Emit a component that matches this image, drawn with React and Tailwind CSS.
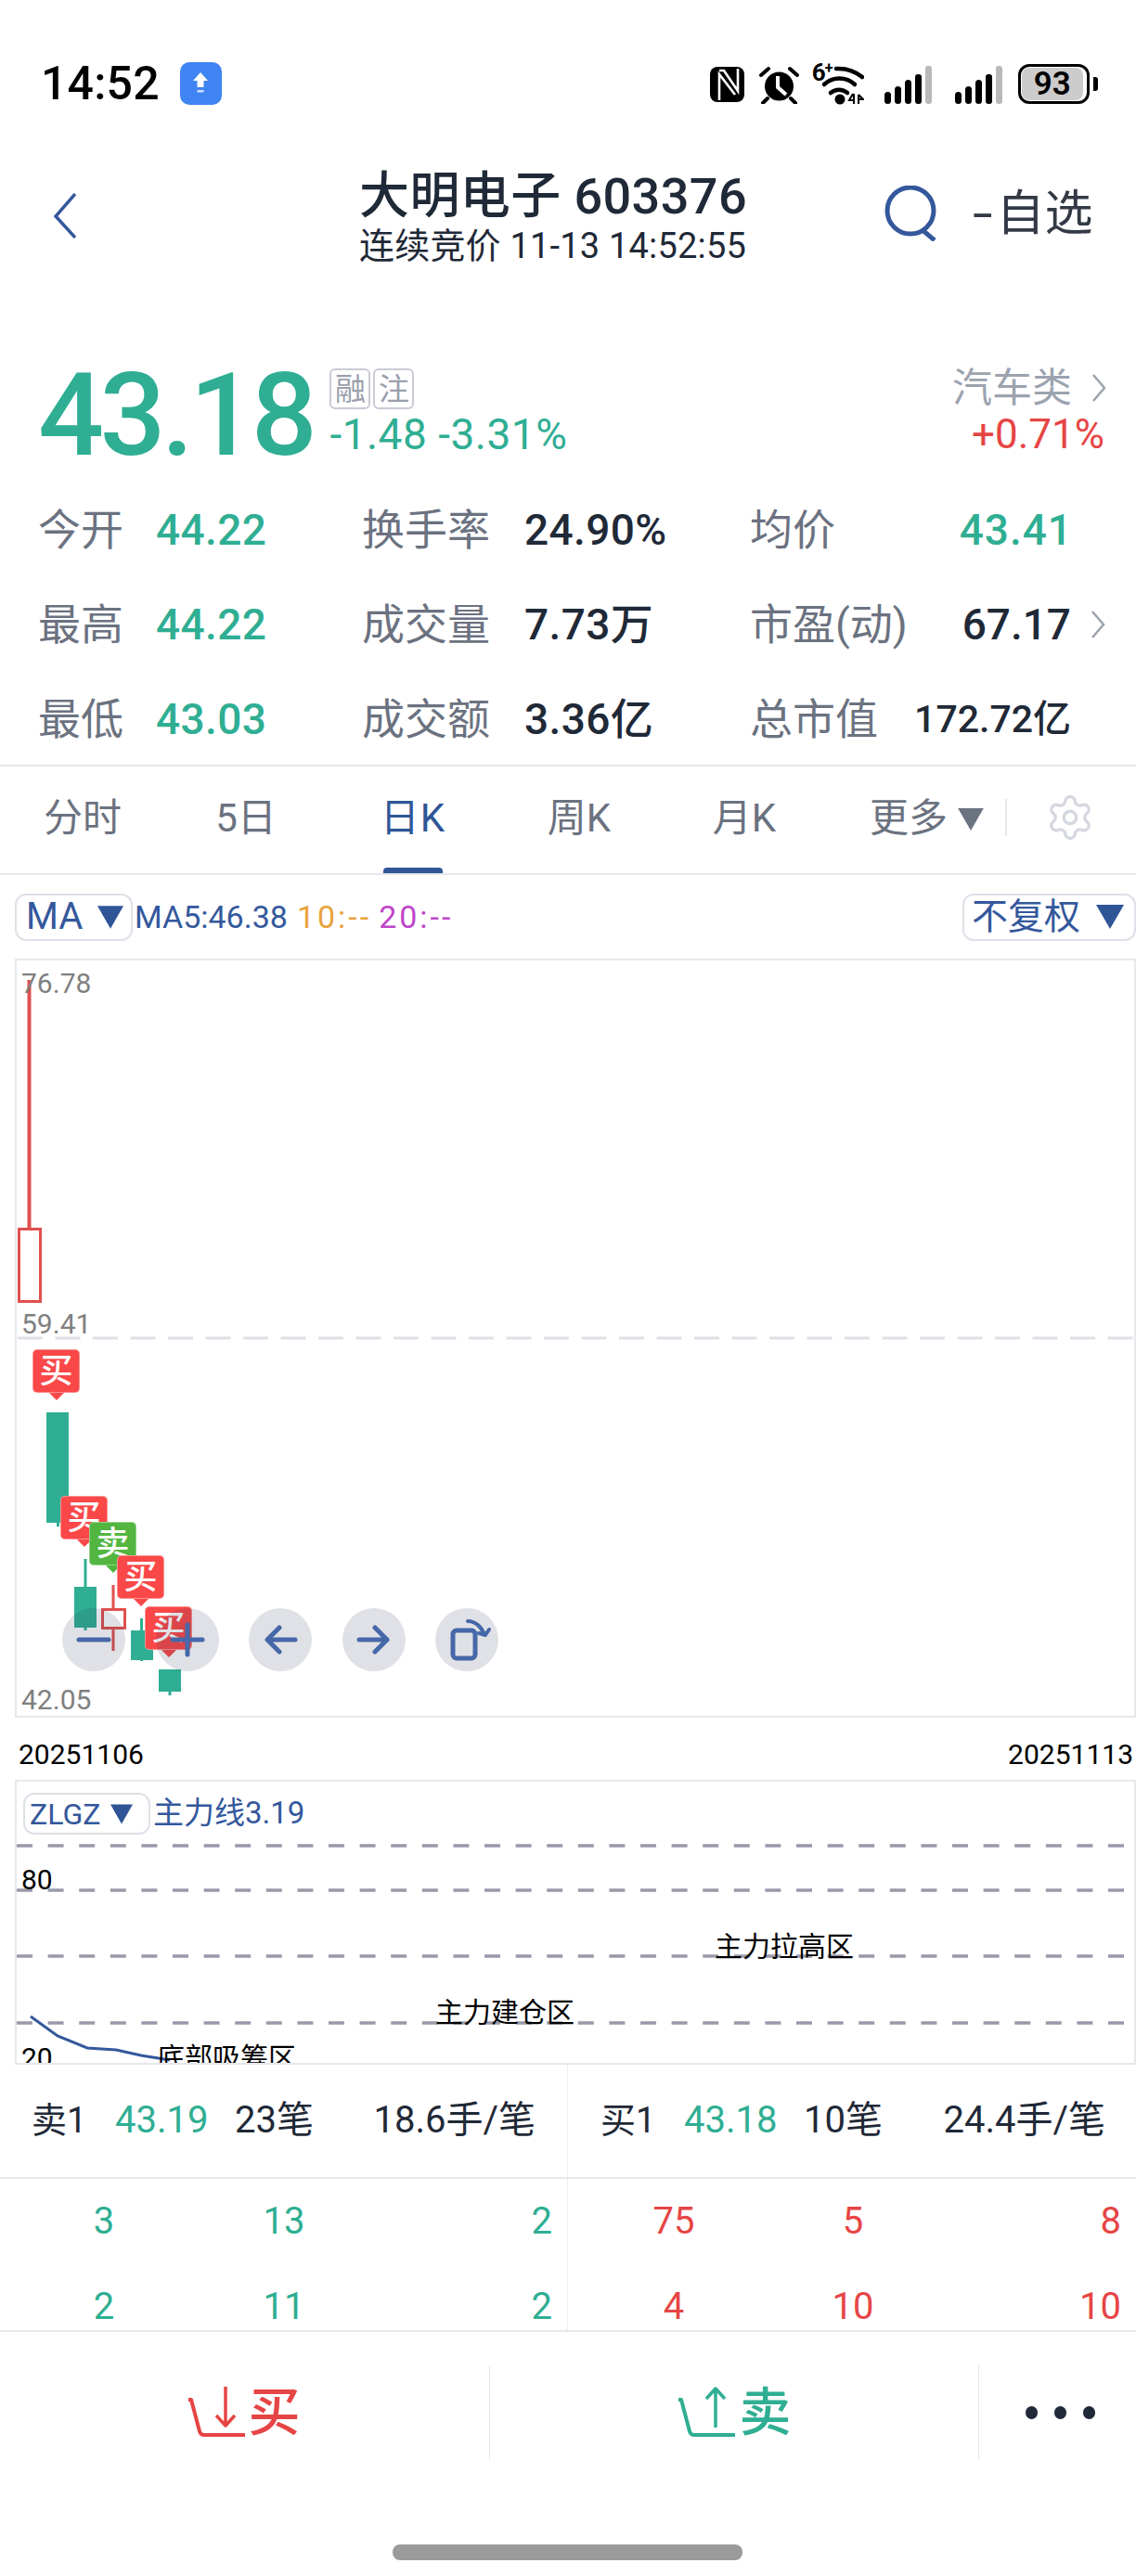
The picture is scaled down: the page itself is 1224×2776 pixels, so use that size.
import React from "react";
import { Settings } from "lucide-react";

const TEAL = "text-[#2fae93]";
const RED = "text-[#e64545]";

const Tri = ({ className }) => (
  <svg viewBox="0 0 30 26" className={className}>
    <polygon points="0,0 30,0 15,26" fill="currentColor" />
  </svg>
);

const Chevron = ({ className }) => (
  <svg viewBox="0 0 16 30" className={className} fill="none" stroke="currentColor" strokeWidth="2.5">
    <path d="M2 1 L14 15 L2 29" />
  </svg>
);

const Signal = ({ className }) => (
  <svg viewBox="0 0 51 41" className={className}>
    <rect x="0" y="28" width="7" height="13" rx="3.5" fill="#000" />
    <rect x="11" y="22" width="7" height="19" rx="3.5" fill="#000" />
    <rect x="22" y="15" width="7" height="26" rx="3.5" fill="#000" />
    <rect x="33" y="9" width="7" height="32" rx="3" fill="#000" />
    <rect x="44" y="0" width="7" height="41" rx="3" fill="#b9b9b9" />
  </svg>
);

const StatusBar = () => (
  <div className="h-[150px] flex items-start pt-[67px] pl-[44px] text-black">
    <span className="text-[50px] font-medium leading-[46px] tracking-[0.2px]">14:52</span>
    <div className="ml-[22px] w-[45px] h-[46px] rounded-[10px] bg-[#3f84f2] flex items-center justify-center">
      <svg viewBox="0 0 20 26" className="w-[20px] h-[26px]">
        <path d="M10 1 L18 10 H13.5 V17 H6.5 V10 H2 Z" fill="#fff" />
        <rect x="6.5" y="20" width="7" height="2.5" fill="#cfe0ff" />
      </svg>
    </div>
    <svg viewBox="0 0 37 38" className="ml-[526px] mt-[5px] w-[37px] h-[38px]">
      <rect width="37" height="38" rx="8" fill="#000" />
      <path d="M10 36 V8 L27 30 M10 4 H15 L30 26 V2" fill="none" stroke="#fff" strokeWidth="2.6" />
    </svg>
    <svg viewBox="0 0 43 41" className="ml-[16px] mt-[4px] w-[43px] h-[41px]">
      <circle cx="21.5" cy="22" r="15.5" fill="#000" />
      <path d="M20 11 V23 L29 31" fill="none" stroke="#fff" strokeWidth="4" />
      <path d="M2 10 L10 3 M41 10 L33 3 M9 35 L4 40 M34 35 L39 40" fill="none" stroke="#000" strokeWidth="4" strokeLinecap="round" />
    </svg>
    <div className="relative ml-[14px] w-[56px] h-[46px]">
      <span className="absolute left-0 top-[-4px] text-[26px] font-bold leading-[30px]">6</span>
      <span className="absolute left-[14px] top-[-3px] text-[16px] font-bold leading-[20px]">+</span>
      <svg viewBox="0 0 56 46" className="w-[56px] h-[46px]">
        <path d="M26 7 A40 40 0 0 1 54 16" fill="none" stroke="#000" strokeWidth="4.5" strokeLinecap="round" />
        <path d="M13 24 A24 24 0 0 1 46 24" fill="none" stroke="#000" strokeWidth="4.5" strokeLinecap="round" />
        <path d="M20 33 A14 14 0 0 1 38 33" fill="none" stroke="#000" strokeWidth="4.5" strokeLinecap="round" />
        <circle cx="30" cy="40" r="5.5" fill="#000" />
        <path d="M44 34 L40 41 H46 M45 34 V45 M50 35 V45 M50 35 L55 40 H50" fill="none" stroke="#000" strokeWidth="2" />
      </svg>
    </div>
    <Signal className="ml-[22px] mt-[4px] w-[51px] h-[41px]" />
    <Signal className="ml-[25px] mt-[4px] w-[51px] h-[41px]" />
    <div className="ml-[17px] mt-[2px] w-[77px] h-[43px] rounded-[12px] border-[3px] border-black bg-white p-[1px]">
      <div className="h-full w-[66px] rounded-[8px] bg-[#cccccc] flex items-center justify-center text-[35px] font-semibold leading-none">93</div>
    </div>
    <div className="ml-[4px] mt-[16px] w-[5px] h-[15px] rounded-r-[3px] bg-black" />
  </div>
);

const Header = () => (
  <div className="h-[170px] flex items-start">
    <svg viewBox="0 0 24 49" className="ml-[58px] mt-[58px] w-[24px] h-[49px]" fill="none" stroke="#34589c" strokeWidth="3.5">
      <path d="M23 1 L2 25 L23 48" />
    </svg>
    <div className="ml-[305px] w-[442px] mt-[34px] text-[#1f2937]">
      <div className="text-[54px] font-medium leading-[56px] tracking-[0.4px] whitespace-nowrap">大明电子 603376</div>
      <div className="text-[38px] leading-[42px] mt-[4px] tracking-[0.2px] whitespace-nowrap">连续竞价 11-13 14:52:55</div>
    </div>
    <svg viewBox="0 0 60 60" className="ml-[123px] mt-[50px] w-[60px] h-[60px]" fill="none" stroke="#34589c" strokeWidth="5">
      <circle cx="29" cy="27" r="25" />
      <path d="M42 48 L55 59" />
    </svg>
    <div className="ml-[36px] mt-[51px] text-[52px] leading-[60px] text-[#333a45] whitespace-nowrap">
      <span className="inline-block scale-x-150 origin-left mr-[11px]">-</span>自选
    </div>
  </div>
);

const Quote = () => (
  <div className="h-[200px] flex items-start pl-[41px] pt-[62px]">
    <div className="mt-[10px] text-[125px] font-medium leading-[112px] tracking-[-4.5px] text-[#2fae93]">43.18</div>
    <div className="ml-[18px]">
      <div className="flex gap-[3px] mt-[15px]">
        <div className="w-[44px] h-[44px] flex items-center justify-center rounded-[6px] border-2 border-[#c9cbd6] text-[33px] leading-none text-[#9a9fac]">融</div>
        <div className="w-[44px] h-[44px] flex items-center justify-center rounded-[6px] border-2 border-[#c9cbd6] text-[33px] leading-none text-[#9a9fac]">注</div>
      </div>
      <div className={`mt-[2px] text-[46px] leading-[50px] tracking-[0.5px] whitespace-nowrap ${TEAL}`}>-1.48 -3.31%</div>
    </div>
    <div className="ml-auto pr-[32px] flex flex-col items-end mt-[14px]">
      <div className="flex items-center text-[43px] leading-[44px] text-[#9ca3af]">
        汽车类
        <Chevron className="ml-[21px] w-[16px] h-[30px] text-[#9ca3af]" />
      </div>
      <div className={`mt-[3px] mr-[2px] text-[44px] leading-[50px] ${RED}`}>+0.71%</div>
    </div>
  </div>
);

const STATS = [
  ["今开", "44.22", "换手率", "24.90%", "均价", "43.41", false],
  ["最高", "44.22", "成交量", "7.73万", "市盈(动)", "67.17", true],
  ["最低", "43.03", "成交额", "3.36亿", "总市值", "172.72亿", false],
];

const Stats = () => (
  <div className="h-[306px] border-b-2 border-[#e7e8ec]">
    {STATS.map((row, i) => (
      <div key={i} className="h-[102px] grid grid-cols-[127px_222px_175px_243px_346px_69px] pl-[41px] items-center text-[46px] leading-none">
        <div className="text-[#6b7280]">{row[0]}</div>
        <div className={`font-medium tracking-[0.4px] ${TEAL}`}>{row[1]}</div>
        <div className="text-[#6b7280]">{row[2]}</div>
        <div className="font-medium tracking-[0.4px] text-[#1f2937]">{row[3]}</div>
        <div className="flex items-center justify-between">
          <span className="text-[#6b7280]">{row[4]}</span>
          <span
            className={
              i === 0
                ? `font-medium tracking-[1px] -mr-[2px] ${TEAL}`
                : i === 1
                  ? "font-medium text-[#1f2937]"
                  : "font-medium text-[41px] text-[#1f2937]"
            }
          >
            {row[5]}
          </span>
        </div>
        <div className="pl-[21px]">{row[6] && <Chevron className="w-[16px] h-[30px] text-[#9ca3af]" />}</div>
      </div>
    ))}
  </div>
);

const Tabs = () => (
  <div className="h-[117px] border-b-2 border-[#e7e8ec] grid grid-cols-[178px_174px_186px_172px_184px_189px_1fr] items-stretch text-[42px] text-[#6b7280]">
    <div className="flex items-center justify-center pb-[5px]">分时</div>
    <div className="flex items-center justify-center pb-[5px]">5日</div>
    <div className="relative flex items-center justify-center pb-[5px] tracking-[1px] text-[#2f5597]">
      日K
      <span className="absolute bottom-0 left-[61px] w-[64px] h-[6px] rounded-t-[4px] bg-[#2f5597]" />
    </div>
    <div className="flex items-center justify-center pb-[5px]">周K</div>
    <div className="flex items-center justify-center pb-[5px]">月K</div>
    <div className="flex items-center pl-[43px] pb-[5px]">
      更多
      <Tri className="ml-[10px] mt-[3px] w-[30px] h-[24px] text-[#6b7280]" />
    </div>
    <div className="flex items-center pb-[5px]">
      <span className="w-[2px] h-[40px] bg-[#e7e8ec]" />
      <Settings className="ml-[41px] w-[54px] h-[54px] text-[#d5d8e0]" strokeWidth={1.5} />
    </div>
  </div>
);

const MaRow = () => (
  <div className="h-[90px] flex items-center pl-[16px] text-[#34589c]">
    <div className="w-[127px] h-[51px] rounded-[12px] border-2 border-[#dfe1e8] flex items-center pl-[10px] text-[40px] leading-none">
      MA
      <Tri className="ml-[16px] w-[28px] h-[25px] text-[#2f5597]" />
    </div>
    <span className="ml-[2px] text-[34px] leading-none whitespace-nowrap">MA5:46.38</span>
    <span className="ml-[10px] text-[34px] leading-none tracking-[3px] text-[#e8a33d] whitespace-nowrap">10:--</span>
    <span className="ml-[8px] text-[34px] leading-none tracking-[3px] text-[#bf45c9] whitespace-nowrap">20:--</span>
    <div className="ml-auto w-[187px] h-[51px] rounded-[12px] border-2 border-[#dfe1e8] flex items-center pl-[8px] text-[39px] leading-none whitespace-nowrap">
      不复权
      <Tri className="ml-[17px] w-[30px] h-[26px] text-[#2f5597]" />
    </div>
  </div>
);

const Tag = ({ text, green, className }) => (
  <div className={`absolute w-[51px] ${className}`}>
    <div
      className={`h-[47px] rounded-[5px] border border-white/40 flex items-center justify-center text-[36px] font-medium leading-none text-white ${
        green ? "bg-[#52b640]" : "bg-[#fa4848]"
      }`}
    >
      {text}
    </div>
    <svg viewBox="0 0 16 8" className="block mx-auto w-[16px] h-[8px]">
      <polygon points="0,0 16,0 8,8" fill={green ? "#52b640" : "#fa4848"} />
    </svg>
  </div>
);

const RoundBtn = ({ className, children }) => (
  <div className={`absolute top-[698px] w-[68px] h-[68px] rounded-full bg-[#2a375a]/15 ${className}`}>
    <svg viewBox="0 0 68 68" className="w-[68px] h-[68px]" fill="none" stroke="#4668a8" strokeWidth="5" strokeLinecap="round" strokeLinejoin="round">
      {children}
    </svg>
  </div>
);

const MainChart = () => (
  <div className="relative ml-[16px] w-[1208px] h-[818px] border-2 border-[#e7e8ec] overflow-hidden">
    <svg viewBox="18 1035 1204 814" className="absolute inset-0 w-[1204px] h-[814px]">
      <line x1="19" y1="1442" x2="1222" y2="1442" stroke="#dfe0e6" strokeWidth="3" strokeDasharray="27 13.5" />
      <rect x="29.5" y="1056" width="4" height="267" fill="#e0504f" />
      <rect x="20.5" y="1324.5" width="23" height="78" fill="#fff" stroke="#e0504f" strokeWidth="3" />
      <rect x="50" y="1522" width="24" height="119" fill="#2fae93" />
      <rect x="61" y="1641" width="3" height="4" fill="#2fae93" />
      <rect x="90.5" y="1680" width="3" height="77" fill="#2fae93" />
      <rect x="80" y="1710" width="24" height="44" fill="#2fae93" />
      <rect x="120.5" y="1708" width="3" height="71" fill="#e0504f" />
      <rect x="110.5" y="1734.5" width="24" height="20" fill="#fff" stroke="#e0504f" strokeWidth="3" />
      <rect x="151" y="1744" width="3" height="46" fill="#2fae93" />
      <rect x="141" y="1757" width="24" height="32" fill="#2fae93" />
      <rect x="171" y="1799" width="24" height="24" fill="#2fae93" />
      <rect x="181.5" y="1823" width="3" height="4" fill="#2fae93" />
    </svg>
    <span className="absolute left-[5px] top-[7px] text-[30px] leading-[35px] text-[#7f7f7f]">76.78</span>
    <span className="absolute left-[5px] top-[374px] text-[30px] leading-[35px] text-[#7f7f7f]">59.41</span>
    <span className="absolute left-[5px] top-[783px] text-[30px] leading-[28px] text-[#7f7f7f]">42.05</span>
    <Tag text="买" className="left-[17px] top-[419px]" />
    <Tag text="买" className="left-[47px] top-[577px]" />
    <Tag text="卖" green className="left-[78px] top-[605px]" />
    <Tag text="买" className="left-[108px] top-[641px]" />
    <Tag text="买" className="left-[138px] top-[696px]" />
    <RoundBtn className="left-[49px]">
      <path d="M18 34 H50" />
    </RoundBtn>
    <RoundBtn className="left-[150px]">
      <path d="M18 34 H50 M34 18 V50" />
    </RoundBtn>
    <RoundBtn className="left-[250px]">
      <path d="M50 34 H20 M33 21 L20 34 L33 47" />
    </RoundBtn>
    <RoundBtn className="left-[351px]">
      <path d="M18 34 H48 M35 21 L48 34 L35 47" />
    </RoundBtn>
    <RoundBtn className="left-[451px]">
      <rect x="19" y="24" width="24" height="30" rx="4" />
      <path d="M35 14 C43 14 50 20 53 29 M47 27 L54 29 L58 23" strokeWidth="4" />
    </RoundBtn>
  </div>
);

const Dates = () => (
  <div className="h-[67px] flex items-start justify-between pl-[20px] pr-[3px] pt-[22px] text-[30px] leading-[36px] text-black">
    <span>20251106</span>
    <span>20251113</span>
  </div>
);

const SubChart = () => (
  <div className="relative ml-[16px] w-[1208px] h-[307px] border-2 border-[#e7e8ec] overflow-hidden text-[30px] leading-[36px] text-black">
    <svg viewBox="18 1920 1204 303" className="absolute inset-0 w-[1204px] h-[303px]">
      <g stroke="#9899a9" strokeWidth="3.5" strokeDasharray="17 16.6">
        <line x1="18" y1="1989" x2="1222" y2="1989" />
        <line x1="18" y1="2037" x2="1222" y2="2037" />
        <line x1="18" y1="2108" x2="1222" y2="2108" />
        <line x1="18" y1="2180" x2="1222" y2="2180" />
      </g>
      <polyline points="33,2173 62,2194 94,2207 125,2209 152,2215 183,2220" fill="none" stroke="#34589c" strokeWidth="3" />
    </svg>
    <div className="absolute left-[7px] top-[12px] w-[137px] h-[45px] rounded-[12px] border-2 border-[#dfe1e8] bg-white flex items-center pl-[5px] text-[#34589c] text-[32px] leading-none">
      ZLGZ
      <Tri className="ml-[11px] w-[24px] h-[24px] text-[#2f5597]" />
    </div>
    <span className="absolute left-[147px] top-[15px] text-[33px] leading-[38px] text-[#34589c] whitespace-nowrap">主力线3.19</span>
    <span className="absolute left-[5px] top-[88px]">80</span>
    <span className="absolute left-[752px] top-[160px] whitespace-nowrap">主力拉高区</span>
    <span className="absolute left-[451px] top-[231px] whitespace-nowrap">主力建仓区</span>
    <span className="absolute left-[5px] top-[280px]">20</span>
    <span className="absolute left-[151px] top-[280px] whitespace-nowrap">底部吸筹区</span>
  </div>
);

const BookHead = ({ label, price, count, avg, className }) => (
  <div className={`h-[121px] grid grid-cols-[90px_129px_1fr_auto] items-center pb-[1px] text-[40px] leading-none text-[#1f2937] ${className}`}>
    <span className="text-[38px]">{label}</span>
    <span className={TEAL}>{price}</span>
    <span>{count}</span>
    <span>{avg}</span>
  </div>
);

const BookRow = ({ cells, color, first, last }) => (
  <div className={`h-[92px] grid items-center text-[40px] leading-none ${color} ${first} ${last}`}>
    <span className="text-center">{cells[0]}</span>
    <span className="text-center">{cells[1]}</span>
    <span className="text-right">{cells[2]}</span>
  </div>
);

const Book = () => (
  <div>
    <div className="flex border-b-2 border-[#e7e8ec]">
      <BookHead label="卖1" price="43.19" count="23笔" avg="18.6手/笔" className="w-[612px] pl-[34px] pr-[34px] border-r border-[#eceef0]" />
      <BookHead label="买1" price="43.18" count="10笔" avg="24.4手/笔" className="w-[612px] pl-[35px] pr-[33px]" />
    </div>
    <div className="h-[165px] flex overflow-hidden border-b-2 border-[#e7e8ec]">
      <div className="w-[612px] border-r border-[#eceef0]">
        <BookRow cells={[3, 13, 2]} color={TEAL} first="grid-cols-[224px_164px_1fr]" last="pr-[16px]" />
        <BookRow cells={[2, 11, 2]} color={TEAL} first="grid-cols-[224px_164px_1fr]" last="pr-[16px]" />
      </div>
      <div className="w-[612px]">
        <BookRow cells={[75, 5, 8]} color={RED} first="grid-cols-[228px_158px_1fr]" last="pr-[16px]" />
        <BookRow cells={[4, 10, 10]} color={RED} first="grid-cols-[228px_158px_1fr]" last="pr-[16px]" />
      </div>
    </div>
  </div>
);

const Actions = () => (
  <div className="h-[263px] relative">
    <div className="flex items-start pt-[36px]">
      <div className="w-[528px] h-[102px] border-r border-[#e3e5ea] flex items-center justify-center pr-[2px] text-[#e64545]">
        <svg viewBox="0 0 64 56" className="w-[64px] h-[56px]" fill="none" stroke="currentColor" strokeWidth="3.5" strokeLinejoin="round">
          <path d="M1 14 H4 L13 48 Q14 52 18 52 H62" strokeWidth="4" />
          <path d="M41 0 V42 M31 31 L41 42 L51 31" />
        </svg>
        <span className="ml-[2px] text-[56px] leading-none font-medium">买</span>
      </div>
      <div className="w-[527px] h-[102px] border-r border-[#e3e5ea] flex items-center justify-center text-[#2fae93]">
        <svg viewBox="0 0 64 56" className="w-[64px] h-[56px]" fill="none" stroke="currentColor" strokeWidth="3.5" strokeLinejoin="round">
          <path d="M1 14 H4 L13 48 Q14 52 18 52 H62" strokeWidth="4" />
          <path d="M41 44 V2 M31 13 L41 2 L51 13" />
        </svg>
        <span className="ml-[3px] text-[56px] leading-none font-medium">卖</span>
      </div>
      <div className="flex-1 h-[102px] flex items-center pl-[50px] gap-[18px]">
        <span className="w-[13px] h-[14px] rounded-full bg-[#1f2937]" />
        <span className="w-[13px] h-[14px] rounded-full bg-[#1f2937]" />
        <span className="w-[13px] h-[14px] rounded-full bg-[#1f2937]" />
      </div>
    </div>
    <div className="absolute left-[423px] top-[229px] w-[377px] h-[17px] rounded-[8px] bg-[#9b9b9b]" />
  </div>
);

export default function App() {
  return (
    <div className="w-[1224px] h-[2776px] overflow-hidden bg-white font-[Roboto,'Noto_Sans_CJK_SC',sans-serif]">
      <StatusBar />
      <Header />
      <Quote />
      <Stats />
      <Tabs />
      <MaRow />
      <MainChart />
      <Dates />
      <SubChart />
      <Book />
      <Actions />
    </div>
  );
}
